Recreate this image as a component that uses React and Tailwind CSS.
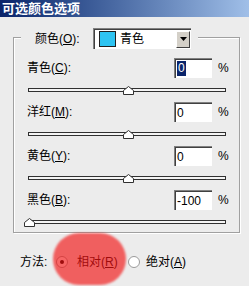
import React from "react";

function Thumb({ left }) {
  return (
    <svg
      className="absolute top-[-3px]"
      style={{ left }}
      width="11"
      height="9"
      viewBox="0 0 11 9"
    >
      <polygon points="0.5,4.5 5.5,0.5 10.5,4.5 10.5,8.5 0.5,8.5" fill="#ffffff" stroke="#303030" strokeWidth="1" />
    </svg>
  );
}

function Slider({ thumb }) {
  return (
    <div className="h-[24px] pl-[14px] pt-[10px]">
      <div className="relative h-[4px] w-[198px] border border-[#303030] bg-[#f4f4f4]">
        <Thumb left={thumb} />
      </div>
    </div>
  );
}

function Field({ label, letter, value, selected }) {
  return (
    <div className="flex h-[20px] items-center pl-[13px] pr-[11px]">
      <span className="text-[12px] leading-none text-black">
        {label}(<u className="underline-offset-[1px]">{letter}</u>):
      </span>
      <div className="ml-auto flex h-[20px] w-[38px] items-center border-t border-l border-[#808080] border-r-[#f4f4f4] border-b-[#f4f4f4] bg-white pl-[2px] shadow-[inset_1px_1px_0_#404040]">
        {selected ? (
          <span className="inline-block h-[15px] bg-[#0a246a] px-[1px] text-[12px] leading-[15px] text-white">{value}</span>
        ) : (
          <span className="text-[12px] leading-none text-black">{value}</span>
        )}
      </div>
      <span className="ml-[6px] w-[10px] text-[12px] leading-none text-black">%</span>
    </div>
  );
}

function Radio({ checked }) {
  return (
    <svg width="12" height="12" viewBox="0 0 12 12" className="shrink-0">
      <circle cx="6" cy="6" r="5.5" fill="#ffffff" stroke="#9a9a9a" strokeWidth="1" />
      {checked && <circle cx="6" cy="6" r="2" fill="#000000" />}
    </svg>
  );
}

export default function App() {
  return (
    <div className="relative h-[286px] w-[249px] overflow-hidden bg-[#ececec] font-['Liberation_Sans','Noto_Sans_CJK_SC',sans-serif]">
      <div className="flex h-[17px] items-center bg-gradient-to-r from-[#0a246a] to-[#a0bfe8] pl-[2px]">
        <span className="text-[13px] font-bold leading-none text-white">可选颜色选项</span>
      </div>

      <div className="ml-[13px] mt-[20px] h-[196px] w-[227px] border border-[#a0a0a0] shadow-[inset_1px_1px_0_#ffffff,1px_1px_0_#ffffff]">
        <div className="ml-[7px] mt-[-10px] flex h-[21px] w-[177px] items-center bg-[#ececec] pl-[14px] pr-[7px]">
          <span className="text-[12px] leading-none text-black">
            颜色(<u className="underline-offset-[1px]">O</u>):
          </span>
          <div className="ml-auto flex h-[21px] w-[98px] items-center border-t border-l border-[#808080] border-r-[#f4f4f4] border-b-[#f4f4f4] bg-white shadow-[inset_1px_1px_0_#404040]">
            <div className="ml-[5px] h-[16px] w-[17px] border border-[#202020] bg-[#2ec4f2]" />
            <span className="ml-[4px] text-[12px] leading-none text-black">青色</span>
            <div className="ml-auto mr-[1px] flex h-[17px] w-[14px] items-center justify-center border border-t-white border-l-white border-r-[#404040] border-b-[#404040] bg-[#d4d0c8]">
              <svg width="7" height="4" viewBox="0 0 7 4">
                <polygon points="0,0 7,0 3.5,4" fill="#000" />
              </svg>
            </div>
          </div>
        </div>

        <div className="pt-[9px]">
          <Field label="青色" letter="C" value="0" selected />
          <Slider thumb={94} />
          <Field label="洋红" letter="M" value="0" />
          <Slider thumb={94} />
          <Field label="黄色" letter="Y" value="0" />
          <Slider thumb={94} />
          <Field label="黑色" letter="B" value="-100" />
          <Slider thumb={-5} />
        </div>
      </div>

      <div className="mt-[19px] flex h-[20px] items-center pl-[20px]">
        <span className="w-[36px] text-[12px] leading-none text-black">方法:</span>
        <div className="flex w-[72px] items-center">
          <Radio checked />
          <span className="ml-[9px] text-[12px] leading-none text-black">
            相对(<u className="underline-offset-[1px]">R</u>)
          </span>
        </div>
        <Radio />
        <span className="ml-[6px] text-[12px] leading-none text-black">
          绝对(<u className="underline-offset-[1px]">A</u>)
        </span>
      </div>

      <div className="absolute left-[53px] top-[233px] h-[52px] w-[73px] rounded-full bg-[rgba(242,20,20,0.65)] blur-[1px]" />
    </div>
  );
}
